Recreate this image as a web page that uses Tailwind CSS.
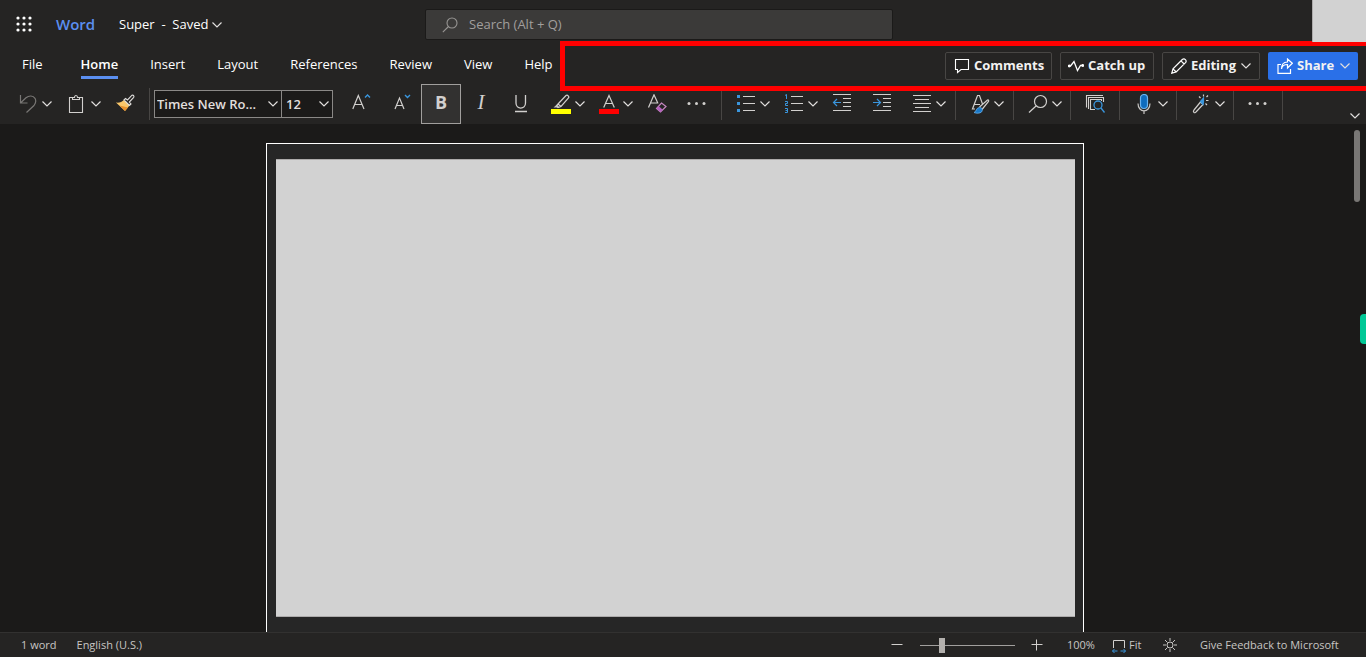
<!DOCTYPE html>
<html lang="en">
<head>
<meta charset="utf-8">
<meta name="viewport" content="width=device-width, initial-scale=1">
<title>Super - Word</title>
<script src="https://cdn.jsdelivr.net/npm/@tailwindcss/browser@4"></script>
</head>
<body class="relative flex h-screen flex-col overflow-hidden bg-[#1b1a19] font-['Segoe_UI','Open_Sans',sans-serif] text-[13px] text-white">
<svg class="hidden">
  <symbol id="chev" viewBox="0 0 10 6"><path d="M.5 .5 5 5 9.5 .5" fill="none" stroke="#e1dfdd" stroke-width="1.2"/></symbol>
  <symbol id="dots" viewBox="0 0 20 20"><g fill="#d2d0ce"><circle cx="2" cy="9.500" r="1.500"/><circle cx="9.500" cy="9.500" r="1.500"/><circle cx="17" cy="9.500" r="1.500"/></g></symbol>
</svg>

<header class="shrink-0 bg-[#252423]">
  <!-- Title row -->
  <div class="relative flex h-12 items-center">
    <button aria-label="App launcher" class="flex w-[47px] justify-center"><svg class="size-4" viewBox="0 0 16 16" fill="#fff"><circle cx="2" cy="2" r="1.6"/><circle cx="8" cy="2" r="1.6"/><circle cx="14" cy="2" r="1.6"/><circle cx="2" cy="8" r="1.6"/><circle cx="8" cy="8" r="1.6"/><circle cx="14" cy="8" r="1.6"/><circle cx="2" cy="14" r="1.6"/><circle cx="8" cy="14" r="1.6"/><circle cx="14" cy="14" r="1.6"/></svg></button>
    <a href="#" class="ml-[9px] w-[63px] text-[15px] font-semibold text-[#5b8ff0]">Word</a>
    <button class="flex items-center gap-1 pt-[2px] whitespace-pre"><span>Super  -  Saved</span><svg class="h-[6px] w-[10px]"><use href="#chev"/></svg></button>
    <label class="absolute top-[9px] left-1/2 ml-[-258px] flex h-[31px] w-[468px] items-center rounded-xs border border-[#1b1a19] bg-[#3b3a39] pl-4">
      <svg class="size-4" viewBox="0 0 16 16" fill="none" stroke="#979593" stroke-width="1.1"><circle cx="10" cy="6" r="5"/><path d="M6.5 9.500 .8 15.200"/></svg>
      <input type="text" aria-label="Search" placeholder="Search (Alt + Q)" class="ml-[11px] w-80 bg-transparent placeholder:text-[#a19f9d]">
    </label>
  </div>

  <!-- Tabs and document actions -->
  <div class="flex h-9 items-center pr-2 pl-[22px]">
    <nav class="flex h-[31px] gap-8 self-start">
      <button class="mr-[6px] h-full border-y-[3px] border-transparent pt-[2px]">File</button>
      <button class="h-full border-y-[3px] border-t-transparent border-b-[#5b8ff0] pt-[2px] font-semibold">Home</button>
      <button class="h-full border-y-[3px] border-transparent pt-[2px]">Insert</button>
      <button class="h-full border-y-[3px] border-transparent pt-[2px]">Layout</button>
      <button class="h-full border-y-[3px] border-transparent pt-[2px]">References</button>
      <button class="h-full border-y-[3px] border-transparent pt-[2px]">Review</button>
      <button class="h-full border-y-[3px] border-transparent pt-[2px]">View</button>
      <button class="h-full border-y-[3px] border-transparent pt-[2px]">Help</button>
    </nav>
    <div class="ml-auto flex gap-2 font-bold text-[#f3f2f1]">
      <button class="flex h-7 w-[107px] items-center gap-1 rounded-xs border border-[#484644] pl-2"><svg class="size-4 shrink-0" viewBox="0 0 16 16" fill="none" stroke="#fff" stroke-width="1.1"><path d="M1.500 1.500H14.500V11.500H7L3.500 14.500V11.500H1.500Z"/></svg>Comments</button>
      <button class="flex h-7 w-[94px] items-center gap-1 rounded-xs border border-[#484644] pl-[7px]"><svg class="size-4 shrink-0" viewBox="0 0 16 16" fill="none" stroke="#fff" stroke-width="1.3"><path d="M1 8H2.500L6 3.500 9.500 12.500 12.500 7.500H15"/><circle cx="1.200" cy="8" r=".8" fill="#fff"/><circle cx="14.800" cy="7.500" r=".8" fill="#fff"/></svg>Catch up</button>
      <button class="flex h-7 w-[98px] items-center gap-1 rounded-xs border border-[#484644] pl-2"><svg class="size-4 shrink-0" viewBox="0 0 16 16" fill="none" stroke="#fff" stroke-width="1.2"><path d="M.8 15.200 2 10.800 11.300 1.500C13.500-.3 16.300 2.500 14.500 4.700L5.200 14ZM2 10.800 5.200 14M10 2.800 13.200 6"/></svg>Editing<svg class="ml-auto mr-2 h-[6px] w-[10px]"><use href="#chev"/></svg></button>
      <button class="flex h-7 w-[90px] items-center gap-1 rounded-xs bg-[#2a70e8] pl-[9px]"><svg class="size-4 shrink-0" viewBox="0 0 16 16" fill="none" stroke="#fff" stroke-width="1.2"><path d="M4 6.500H1V15.300H13.500V11M4.500 11C5 7.500 7 6.500 10.500 6.500V10L15.300 5.300 10.500 1V4C6 4 4.500 7 4.500 11Z"/></svg>Share<svg class="ml-auto mr-2 h-[6px] w-[10px]"><use href="#chev"/></svg></button>
    </div>
  </div>

  <!-- Ribbon -->
  <div class="flex h-10 items-center pl-2">
    <button aria-label="Undo" class="mr-px flex h-full w-12 items-center gap-1 pl-[10px]"><svg class="size-5" viewBox="0 0 20 20" fill="none" stroke="#797775" stroke-width="1.200"><path d="M2.500 1V9H9.500M2.500 9 8 3.800C11 1.300 15 1.300 17 4.300 18.500 7 17.500 9.500 16 11.500L8.500 18.500"/></svg><svg class="h-[6px] w-[10px]"><use href="#chev"/></svg></button>
    <button aria-label="Paste" class="flex h-full w-12 items-center gap-1 pl-[10px]"><svg class="size-5" viewBox="0 0 20 20" fill="none" stroke="#d2d0ce" stroke-width="1.100"><path d="M6 3.500H2.500V18.500H15.500V3.500H12M5.500 5.500V3.500H7.500C7.500.800 10.500.800 10.500 3.500H12.500V5.500Z"/></svg><svg class="h-[6px] w-[10px]"><use href="#chev"/></svg></button>
    <button aria-label="Format painter" class="flex w-10 justify-center"><svg class="size-5" viewBox="0 0 20 20"><path d="M1 8.500C4 9 7 8 9 6L14.500 11.500 10 17Z" fill="#f9c66a"/><path d="M4.500 11.500 13 13.500 10 17Z" fill="#e8912d"/><path d="M9 6 10.500 4.500 12.500 6 17 1.200C18.300.700 19.500 2 18.700 3.300L14.300 8 16 10 14.500 11.500Z" fill="#252423" stroke="#e1dfdd" stroke-width="1.100"/></svg></button>
    <div class="mx-1 h-8 w-px bg-[#484644]"></div>
    <div class="mr-2 flex h-[28px] w-[179px] border border-[#8a8886] bg-[#1b1a19] text-[#e1dfdd]">
      <label class="relative w-[127px] border-r border-[#8a8886]"><select aria-label="Font" class="h-full w-full appearance-none pt-px pl-[2px] text-[13px] font-semibold"><option>Times New Ro...</option></select><svg class="pointer-events-none absolute top-[10px] right-[3px] h-[6px] w-[10px]"><use href="#chev"/></svg></label>
      <label class="relative flex-1"><select aria-label="Font size" class="h-full w-full appearance-none pt-px pl-1 text-[13px] font-semibold"><option>12</option></select><svg class="pointer-events-none absolute top-[10px] right-[3px] h-[6px] w-[10px]"><use href="#chev"/></svg></label>
    </div>
    <button aria-label="Grow font" class="flex w-10 justify-center"><svg class="size-5" viewBox="0 0 20 20" fill="none" stroke="#d2d0ce" stroke-width="1.200"><path d="M1.800 15 7.300 1.500 13 15M3.800 10.500H11"/><path d="M14 3.500 16.500 1 19 3.500" stroke="#3a96dd" stroke-width="1.400"/></svg></button>
    <button aria-label="Shrink font" class="flex w-10 justify-center"><svg class="size-5" viewBox="0 0 20 20" fill="none" stroke="#d2d0ce" stroke-width="1.200"><path d="M4 15 8.500 4 13 15M5.500 11.500H11.500"/><path d="M14 1 16.500 3.500 19 1" stroke="#3a96dd" stroke-width="1.400"/></svg></button>
    <button aria-label="Bold" aria-pressed="true" class="h-10 w-10 border border-[#a19f9d] bg-[#323130] pb-[3px] text-[18px] font-bold text-[#d2d0ce]">B</button>
    <button aria-label="Italic" class="h-10 w-10 pb-[3px] font-['Liberation_Serif',serif] text-[21px] text-[#d2d0ce] italic">I</button>
    <button aria-label="Underline" class="flex w-10 justify-center"><svg class="size-5" viewBox="0 0 20 20" fill="none" stroke="#d2d0ce" stroke-width="1.300"><path d="M5 1V9C5 15.700 14.500 15.700 14.500 9V1M4 17.500H16"/></svg></button>
    <button aria-label="Highlight colour" class="flex h-full w-12 items-center gap-1 pl-[10px]"><svg class="size-5" viewBox="0 0 20 20"><path fill="#ff0" d="M0 15H20V20H0Z"/><path d="M7 10 15 1.500C16.500.500 18.500 2.500 17.500 4L10 12.500 7 13.500 5.500 12ZM7 10 10 12.500" fill="none" stroke="#d2d0ce" stroke-width="1.200"/><path d="M2.500 13.500 6 10.500 8.500 13.500Z" fill="#c8c6c4"/></svg><svg class="h-[6px] w-[10px]"><use href="#chev"/></svg></button>
    <button aria-label="Font colour" class="flex h-full w-12 items-center gap-1 pl-[10px]"><svg class="size-5" viewBox="0 0 20 20"><path fill="red" d="M0 15H20V20H0Z"/><path d="M4.700 13.500 10 1.500 15.300 13.500M6.500 9.500H13.500" fill="none" stroke="#d2d0ce" stroke-width="1.200"/></svg><svg class="h-[6px] w-[10px]"><use href="#chev"/></svg></button>
    <button aria-label="Clear formatting" class="flex w-10 justify-center"><svg class="size-5" viewBox="0 0 20 20" fill="none" stroke-width="1.200"><path d="M1.500 13.500 7 .8 11 9.500M3.300 9H10" stroke="#d2d0ce"/><path d="M14.500 9 19 12.500 13.500 18 9.500 14.500Z" stroke="#c586c0"/><path d="M11.800 12.300 15.800 15.700 13.500 18 9.500 14.500Z" fill="#b560c0"/></svg></button>
    <button aria-label="More font options" class="flex w-10 justify-center"><svg class="size-5"><use href="#dots"/></svg></button>
    <div class="mx-1 h-8 w-px bg-[#484644]"></div>
    <button aria-label="Bullets" class="flex h-full w-12 items-center gap-1 pl-[10px]"><svg class="size-5" viewBox="0 0 20 20"><path fill="#3a96dd" d="M1 1H4V4H1ZM1 8H4V11H1ZM1 15H4V18H1Z"/><path stroke="#d2d0ce" d="M7 2.500H19M7 9.500H19M7 16.500H19"/></svg><svg class="h-[6px] w-[10px]"><use href="#chev"/></svg></button>
    <button aria-label="Numbering" class="flex h-full w-12 items-center gap-1 pl-[10px]"><svg class="size-5" viewBox="0 0 20 20"><path fill="none" stroke="#3a96dd" d="M1 1.500 2.500.500V5M1 7.500H3.500V9.500H1.500V11.500H4M1 14.500H3.500V18.500H1M1.500 16.500H3.500"/><path stroke="#d2d0ce" d="M7 2.500H19M7 9.500H19M7 16.500H19"/></svg><svg class="h-[6px] w-[10px]"><use href="#chev"/></svg></button>
    <button aria-label="Decrease indent" class="flex w-10 justify-center"><svg class="size-5" viewBox="0 0 20 20" fill="none"><path stroke="#d2d0ce" d="M1 .500H19M11 4.500H19M11 8.500H19M11 12.500H19M1 16.500H19"/><path stroke="#3a96dd" stroke-width="1.200" d="M9 8.500H1.500M5 5 1.500 8.500 5 12"/></svg></button>
    <button aria-label="Increase indent" class="flex w-10 justify-center"><svg class="size-5" viewBox="0 0 20 20" fill="none"><path stroke="#d2d0ce" d="M1 .500H19M11 4.500H19M11 8.500H19M11 12.500H19M1 16.500H19"/><path stroke="#3a96dd" stroke-width="1.200" d="M1 8.500H8.500M5 5 8.500 8.500 5 12"/></svg></button>
    <button aria-label="Alignment" class="flex h-full w-12 items-center gap-1 pl-[10px]"><svg class="size-5" viewBox="0 0 20 20"><path stroke="#d2d0ce" d="M1 1.500H19M3 5.500H17M1 9.500H19M3 13.500H17M1 17.500H19"/></svg><svg class="h-[6px] w-[10px]"><use href="#chev"/></svg></button>
    <div class="mr-1 ml-[5px] h-8 w-px bg-[#484644]"></div>
    <button aria-label="Styles" class="flex h-full w-12 items-center gap-1 pl-[10px]"><svg class="size-5" viewBox="0 0 20 20" fill="none" stroke="#d2d0ce" stroke-width="1.200"><path d="M5 15H2.500L7.500 1.500H9.500L12.500 10M4 10.500H10"/><path d="M9.500 13 17.500 6C18.500 5.500 19 6.500 18.500 7.500L12 15.500"/><path d="M4 18.500C6.500 18 6 13.500 9.500 13.500 12.500 13.500 13 16 11.500 18 10 19.500 6 19.500 4 18.500Z" fill="#1979c9" stroke="#6bb3ee" stroke-width=".8"/></svg><svg class="h-[6px] w-[10px]"><use href="#chev"/></svg></button>
    <div class="mr-1 ml-[5px] h-8 w-px bg-[#484644]"></div>
    <button aria-label="Find" class="flex h-full w-12 items-center gap-1 pl-[10px]"><svg class="size-5" viewBox="0 0 20 20" fill="none" stroke="#d2d0ce" stroke-width="1.200"><circle cx="12.500" cy="7.500" r="6"/><path d="M8.300 11.700 1 18.500"/></svg><svg class="h-[6px] w-[10px]"><use href="#chev"/></svg></button>
    <div class="mx-1 h-8 w-px bg-[#484644]"></div>
    <button aria-label="Reuse files" class="flex w-10 justify-center"><svg class="size-5" viewBox="0 0 20 20" fill="none" stroke="#d2d0ce" stroke-width="1.100"><path d="M1.500 13.500V1.500H18M3.500 15V3.500H18.500V8M10 15.500H5.500V5.500H16.500V7"/><circle cx="13" cy="11" r="4" stroke="#3a96dd" stroke-width="1.300"/><path d="M16 14 19.500 18.500" stroke="#3a96dd" stroke-width="1.300"/></svg></button>
    <div class="mx-1 h-8 w-px bg-[#484644]"></div>
    <button aria-label="Dictate" class="flex h-full w-12 items-center gap-1 pl-[10px]"><svg class="size-5" viewBox="0 0 20 20" fill="none" stroke="#c8c6c4" stroke-width="1.200"><rect x="6.500" y=".500" width="7" height="14" rx="3.500" fill="#0f6cbd" stroke="#6bb3ee"/><path d="M4 9.500C4 19.300 16 19.300 16 9.500M10 16.800V20"/></svg><svg class="h-[6px] w-[10px]"><use href="#chev"/></svg></button>
    <div class="mx-1 h-8 w-px bg-[#484644]"></div>
    <button aria-label="Editor" class="flex h-full w-12 items-center gap-1 pl-[10px]"><svg class="size-5" viewBox="0 0 20 20" fill="none" stroke="#d2d0ce" stroke-width="1.200"><path d="M3 18.500C2 17.500 2.500 16.500 3 16L9.500 8 12 10.500 5 18C4.500 18.700 3.700 19 3 18.500Z"/><path d="M9.500 7.500 12.500 4V8L12 10.500Z" fill="#3a96dd" stroke="#3a96dd"/><path d="M8 2.500 9.500 4M12.500.500V2.500M15.500 3 17 1.500M15 6.500H17.500M14.500 9.500 16 11"/></svg><svg class="h-[6px] w-[10px]"><use href="#chev"/></svg></button>
    <div class="mx-1 h-8 w-px bg-[#484644]"></div>
    <button aria-label="More commands" class="flex w-10 justify-center"><svg class="size-5"><use href="#dots"/></svg></button>
    <div class="mx-1 h-8 w-px bg-[#484644]"></div>
    <button aria-label="Collapse ribbon" class="mt-auto mr-[6px] mb-[5px] ml-auto"><svg class="h-[6px] w-[10px]"><use href="#chev"/></svg></button>
  </div>
</header>

<!-- Document canvas -->
<main class="relative flex min-h-0 flex-1 justify-center overflow-hidden pt-[19px] pr-4">
  <article class="flex w-[818px] flex-col border border-b-0 border-white bg-[#262626] pt-[15px] pr-2 pb-[15px] pl-[9px]">
    <div class="flex-1 border-y border-[#adabab] bg-[#d2d2d2]"></div>
  </article>
  <div class="absolute top-[6px] right-[6px] h-[72px] w-[6px] rounded-full bg-[#797775]"></div>
  <div class="absolute top-[190px] right-0 h-[30px] w-[6px] rounded-l bg-[#00c896]"></div>
</main>

<!-- Status bar -->
<footer class="flex h-[25px] shrink-0 items-center border-t border-[#323130] bg-[#252423] pr-[20px] pl-[21px] text-[11px] text-[#c8c6c4]">
  <button class="mr-5 pt-px">1 word</button>
  <button class="pt-px">English (U.S.)</button>
  <div class="ml-auto flex items-center">
    <button aria-label="Zoom out" class="mr-[17px]"><svg class="size-3" viewBox="0 0 12 12"><path d="M.5 5.500H11.500" stroke="#d2d0ce"/></svg></button>
    <input type="range" aria-label="Zoom" min="0" max="100" value="21" class="h-[15px] w-[95px] appearance-none bg-[linear-gradient(#a19f9d,#a19f9d)] bg-[length:100%_1px] bg-center bg-no-repeat [&::-webkit-slider-thumb]:h-[15px] [&::-webkit-slider-thumb]:w-[6px] [&::-webkit-slider-thumb]:appearance-none [&::-webkit-slider-thumb]:bg-[#b3b0ad]">
    <button aria-label="Zoom in" class="ml-4"><svg class="size-3" viewBox="0 0 12 12"><path d="M.5 5.500H11.500M5.500 .500V11.500" stroke="#d2d0ce"/></svg></button>
    <button class="ml-6 w-[45px] pt-px text-left">100%</button>
    <button class="flex w-[51px] items-center gap-[3px] pt-px"><svg class="size-[14px]" viewBox="0 0 14 14" fill="none"><path d="M1.500 9V1.500H12.500V9" stroke="#d2d0ce"/><path d="M.5 12H5.500M8.500 12H13.500M2.500 10 .5 12 2.500 14M11.500 10 13.500 12 11.500 14" stroke="#3a96dd"/></svg>Fit</button>
    <button aria-label="Switch background" class="w-[37px]"><svg class="size-[14px]" viewBox="0 0 14 14" fill="none" stroke="#c8c6c4"><circle cx="7" cy="7" r="3"/><path d="M7 0V3M7 11V14M0 7H3M11 7H14M2 2 4.500 4.500M9.500 9.500 12 12M12 2 9.500 4.500M4.500 9.500 2 12"/></svg></button>
    <a href="#" class="w-[146px] pt-px">Give Feedback to Microsoft</a>
  </div>
</footer>

<!-- Callout over the action buttons, and the covered account picture -->
<div class="pointer-events-none absolute top-[41px] right-0 left-[560px] h-[50px] border-[5px] border-r-0 border-[#f00]"></div>
<div class="absolute top-0 right-0 h-[42px] w-[54px] border-l border-[#adabab] bg-[#d2d2d2]"></div>
</body>
</html>
